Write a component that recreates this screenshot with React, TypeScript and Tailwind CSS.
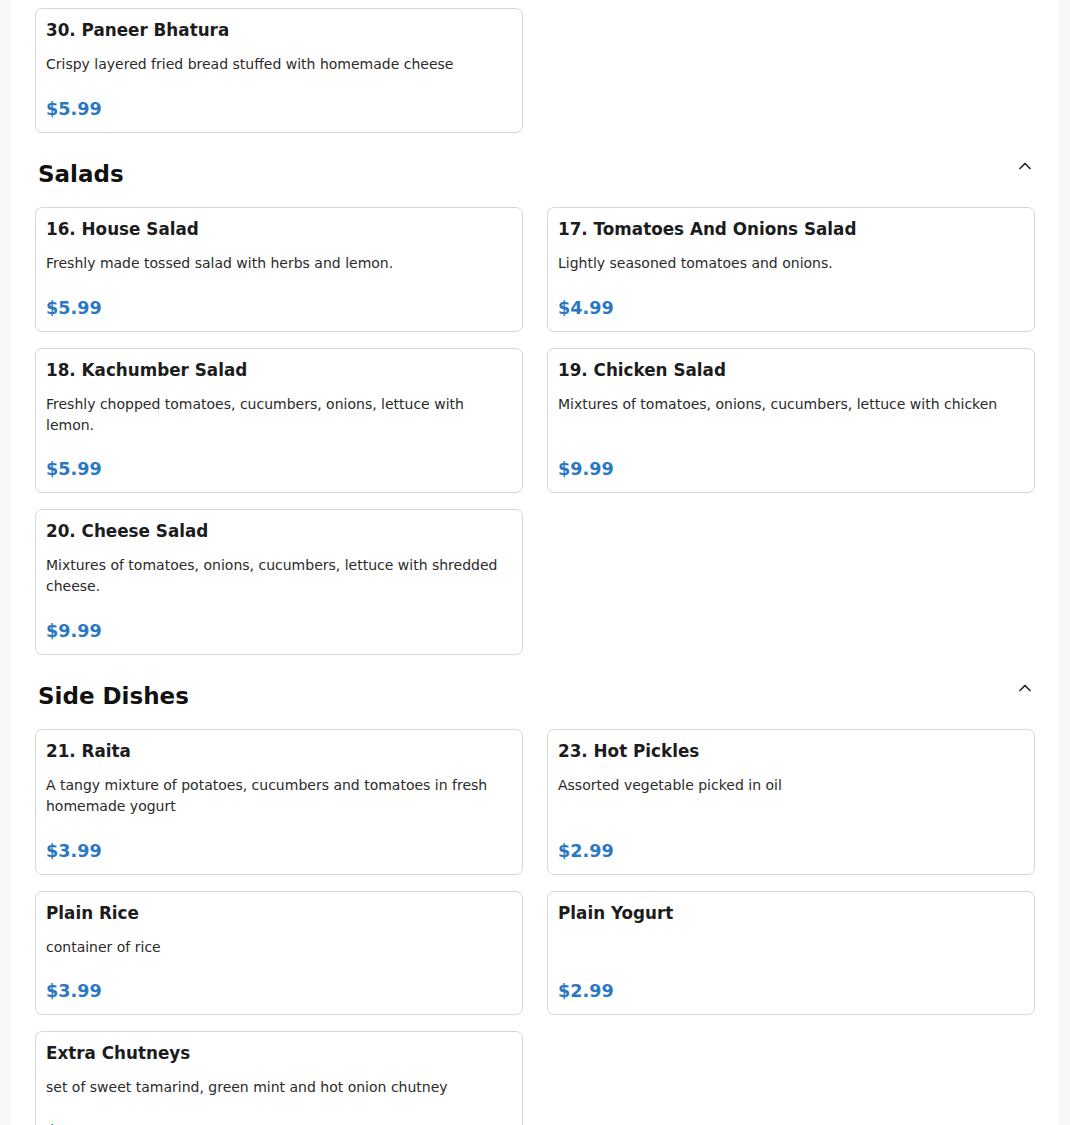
import { ChevronUp } from "lucide-react";

interface MenuItem {
  name: string;
  description?: string;
  price: string;
}

interface Section {
  title?: string;
  items: MenuItem[];
}

const sections: Section[] = [
  {
    items: [
      {
        name: "30. Paneer Bhatura",
        description: "Crispy layered fried bread stuffed with homemade cheese",
        price: "$5.99",
      },
    ],
  },
  {
    title: "Salads",
    items: [
      { name: "16. House Salad", description: "Freshly made tossed salad with herbs and lemon.", price: "$5.99" },
      { name: "17. Tomatoes And Onions Salad", description: "Lightly seasoned tomatoes and onions.", price: "$4.99" },
      {
        name: "18. Kachumber Salad",
        description: "Freshly chopped tomatoes, cucumbers, onions, lettuce with lemon.",
        price: "$5.99",
      },
      { name: "19. Chicken Salad", description: "Mixtures of tomatoes, onions, cucumbers, lettuce with chicken", price: "$9.99" },
      {
        name: "20. Cheese Salad",
        description: "Mixtures of tomatoes, onions, cucumbers, lettuce with shredded cheese.",
        price: "$9.99",
      },
    ],
  },
  {
    title: "Side Dishes",
    items: [
      {
        name: "21. Raita",
        description: "A tangy mixture of potatoes, cucumbers and tomatoes in fresh homemade yogurt",
        price: "$3.99",
      },
      { name: "23. Hot Pickles", description: "Assorted vegetable picked in oil", price: "$2.99" },
      { name: "Plain Rice", description: "container of rice", price: "$3.99" },
      { name: "Plain Yogurt", price: "$2.99" },
      { name: "Extra Chutneys", description: "set of sweet tamarind, green mint and hot onion chutney", price: "$2.50" },
    ],
  },
];

function ItemCard({ item }: { item: MenuItem }) {
  return (
    <div className="flex flex-col rounded-[7px] border border-[#d6d6d6] bg-white px-2.5 pb-2.5 pt-[11px]">
      <h3 className="mb-[13px] text-[16.8px] font-bold leading-[21px] text-[#1c1c1c]">{item.name}</h3>
      {item.description && (
        <p className="text-sm leading-[21px] text-[#2a2a2a]">{item.description}</p>
      )}
      <p className="mt-auto pt-[20.5px] text-[17.6px] font-bold leading-[26px] text-[#2b78c2]">{item.price}</p>
    </div>
  );
}

export default function App() {
  return (
    <div className="min-h-screen bg-[#f8f8f8] font-['DejaVu_Sans',sans-serif]">
      <div className="mx-auto h-[1125px] w-[1048px] overflow-hidden bg-white px-6 pt-2">
        {sections.map((section, i) => (
          <div key={i}>
            {section.title && (
              <div className="mb-[16.5px] mt-6 flex items-start justify-between pl-[3px]">
                <h2 className="text-[23px] font-bold leading-[34px] text-[#111]">{section.title}</h2>
                <ChevronUp size={20} strokeWidth={2} className="-mt-px text-[#222]" />
              </div>
            )}
            <div className="grid grid-cols-2 gap-x-6 gap-y-4">
              {section.items.map((item) => (
                <ItemCard key={item.name} item={item} />
              ))}
            </div>
          </div>
        ))}
      </div>
    </div>
  );
}
